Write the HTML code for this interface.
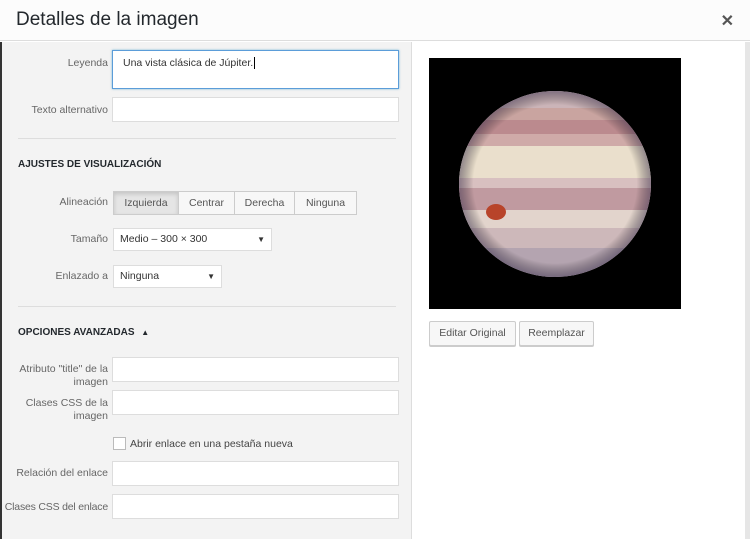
<!DOCTYPE html>
<html><head><meta charset="utf-8"><style>
*{box-sizing:border-box;margin:0;padding:0}
body{width:750px;height:539px;overflow:hidden;background:#fff;font-family:"Segoe UI","Liberation Sans",sans-serif;font-size:10.5px;color:#444;position:relative}
.abs{position:absolute}
.hdr{left:0;top:0;width:750px;height:41px;background:#fcfcfc;border-bottom:1px solid #ddd}
.hdr h1{position:absolute;left:16px;top:9px;font-size:19px;font-weight:400;color:#23282d}
.x{right:16px;top:11px;font-size:16px;font-weight:bold;color:#555}
.left{left:0;top:42px;width:412px;height:497px;background:#f3f3f3;border-left:2px solid #333;border-right:1px solid #ddd}
.lbl{text-align:right;width:108px;left:0;color:#666;line-height:13px;white-space:nowrap}
.inp{background:#fff;border:1px solid #ddd;left:112px;width:287px;height:25px}
.hr{left:18px;width:378px;height:1px;background:#ddd}
.sec{left:18px;font-size:10px;color:#23282d;font-weight:600}
.btn{background:#f7f7f7;border:1px solid #ccc;color:#555;text-align:center;line-height:22px}
.sel{background:#fff;border:1px solid #ddd;height:23px;padding-left:6px;line-height:21px;color:#333}
.sel span{position:absolute;right:6px;font-size:8px;top:0}
.rbtn{background:#f7f7f7;border:1px solid #ccc;border-radius:2px;height:25px;line-height:23px;text-align:center;color:#555;box-shadow:0 1px 0 #ccc}
.edge{left:745px;top:42px;width:5px;height:497px;background:#e6e6e6}
</style></head><body>
<div class="abs hdr"><h1>Detalles de la imagen</h1><div class="abs x">✕</div></div>
<div class="abs left"></div>
<div class="abs edge"></div>

<div class="abs lbl" style="top:57px">Leyenda</div>
<div class="abs" style="left:112px;top:50px;width:287px;height:39px;background:#fff;border:1px solid #5b9dd9;box-shadow:0 0 2px rgba(30,140,190,.6);padding:6px 10px;color:#333">Una vista clásica de Júpiter.<span style="border-left:1px solid #000;margin-left:1px"></span></div>
<div class="abs lbl" style="top:104px">Texto alternativo</div>
<div class="abs inp" style="top:97px"></div>
<div class="abs hr" style="top:138px"></div>
<div class="abs sec" style="top:159px">AJUSTES DE VISUALIZACIÓN</div>

<div class="abs lbl" style="top:196px">Alineación</div>
<div class="abs btn" style="left:113px;top:191px;width:66px;height:24px;background:#e5e5e5;box-shadow:inset 0 2px 4px rgba(0,0,0,.15)">Izquierda</div>
<div class="abs btn" style="left:178px;top:191px;width:57px;height:24px">Centrar</div>
<div class="abs btn" style="left:234px;top:191px;width:61px;height:24px">Derecha</div>
<div class="abs btn" style="left:294px;top:191px;width:63px;height:24px">Ninguna</div>

<div class="abs lbl" style="top:233px">Tamaño</div>
<div class="abs sel" style="left:113px;top:228px;width:159px">Medio – 300 × 300<span>▼</span></div>
<div class="abs lbl" style="top:270px">Enlazado a</div>
<div class="abs sel" style="left:113px;top:265px;width:109px">Ninguna<span>▼</span></div>

<div class="abs hr" style="top:306px"></div>
<div class="abs sec" style="top:327px">OPCIONES AVANZADAS <span style="font-size:8px;margin-left:4px">▲</span></div>

<div class="abs lbl" style="top:363px">Atributo "title" de la<br>imagen</div>
<div class="abs inp" style="top:357px"></div>
<div class="abs lbl" style="top:397px">Clases CSS de la<br>imagen</div>
<div class="abs inp" style="top:390px"></div>
<div class="abs" style="left:113px;top:437px;width:13px;height:13px;background:#fff;border:1px solid #bbb"></div>
<div class="abs" style="left:130px;top:438px;color:#444">Abrir enlace en una pestaña nueva</div>
<div class="abs lbl" style="top:467px">Relación del enlace</div>
<div class="abs inp" style="top:461px"></div>
<div class="abs lbl" style="top:501px;left:-4px;width:112px;letter-spacing:-0.2px">Clases CSS del enlace</div>
<div class="abs inp" style="top:494px"></div>

<svg class="abs" style="left:429px;top:58px" width="252" height="251" viewBox="0 0 252 251">
<defs>
<radialGradient id="sh" cx="0.5" cy="0.5" r="0.5"><stop offset="0.85" stop-color="#000" stop-opacity="0"/><stop offset="1" stop-color="#2a2040" stop-opacity="0.45"/></radialGradient>
<clipPath id="c"><ellipse cx="126" cy="126" rx="96" ry="93"/></clipPath>
</defs>
<rect width="252" height="251" fill="#000"/>
<g clip-path="url(#c)">
<rect width="252" height="251" fill="#d8c8c8"/>
<rect y="30" width="252" height="20" fill="#cbb4b8"/>
<rect y="50" width="252" height="12" fill="#c9a4a0"/>
<rect y="62" width="252" height="14" fill="#bb8a8e"/>
<rect y="76" width="252" height="12" fill="#cfaaa8"/>
<rect y="88" width="252" height="32" fill="#eadfcc"/>
<rect y="120" width="252" height="10" fill="#d8c0c0"/>
<rect y="130" width="252" height="22" fill="#c09aa0"/>
<rect y="152" width="252" height="18" fill="#e2d4cc"/>
<rect y="170" width="252" height="20" fill="#cdb8ba"/>
<rect y="190" width="252" height="30" fill="#b4a4b0"/>
</g>
<ellipse cx="126" cy="126" rx="96" ry="93" fill="url(#sh)"/>
<ellipse cx="67" cy="154" rx="10" ry="8" fill="#b8442a"/>
</svg>
<div class="abs rbtn" style="left:429px;top:321px;width:87px">Editar Original</div>
<div class="abs rbtn" style="left:519px;top:321px;width:75px">Reemplazar</div>
</body></html>
